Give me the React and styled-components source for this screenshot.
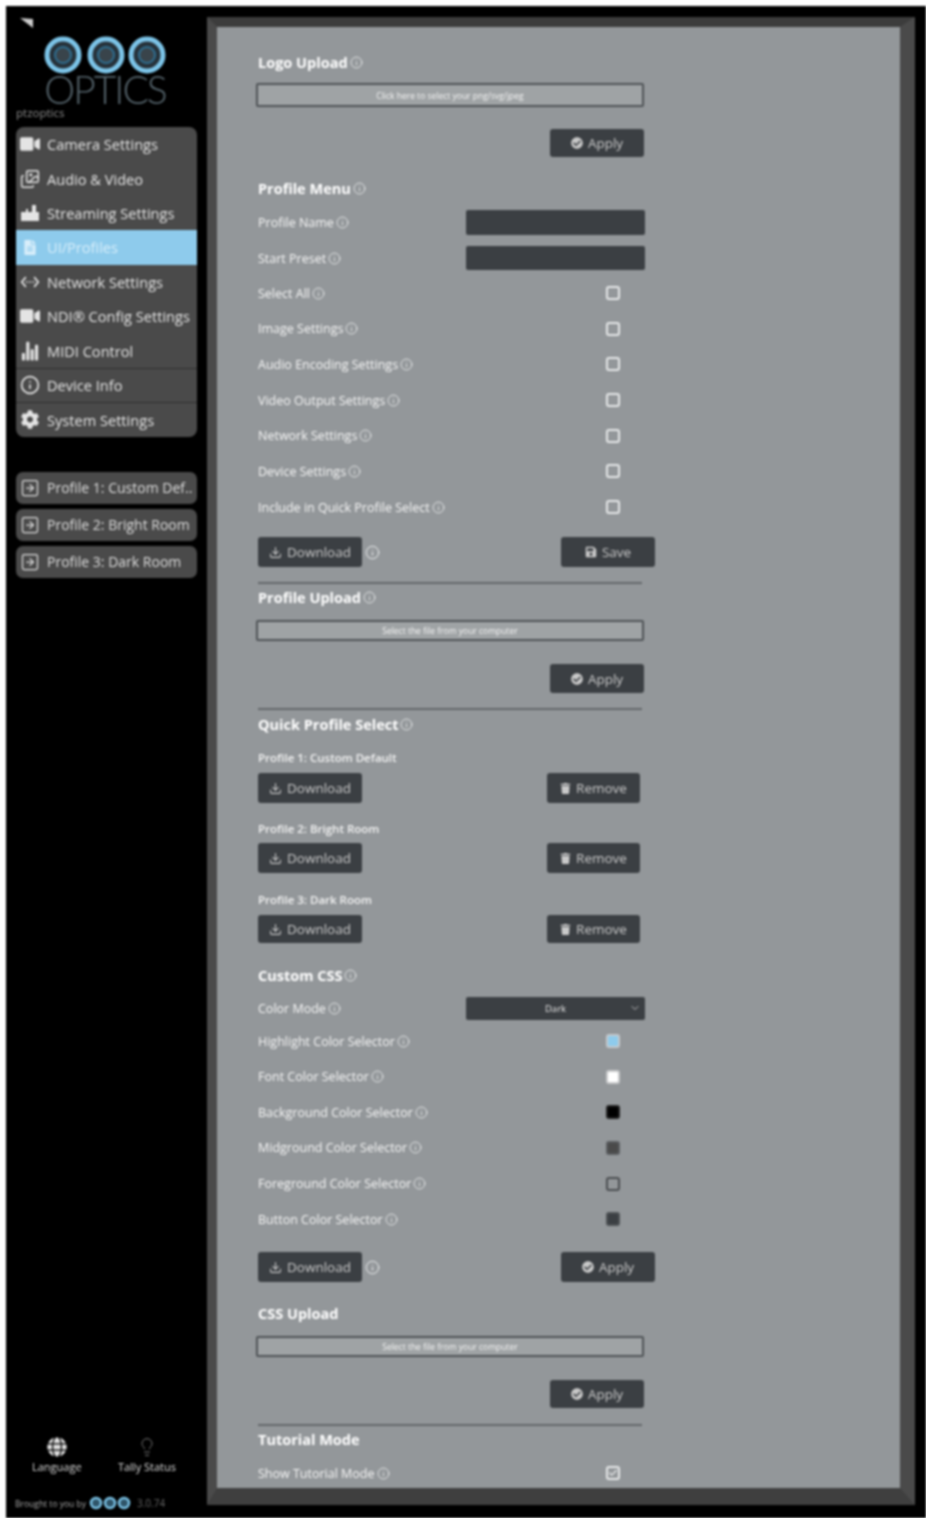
import React from 'react';
import styled, { createGlobalStyle } from 'styled-components';
import { FaVideo, FaFileAlt, FaCog, FaGlobe, FaSave, FaTrash, FaCheckCircle } from 'react-icons/fa';
import { MdSettingsEthernet } from 'react-icons/md';
import { IoStatsChart } from 'react-icons/io5';
import { Info, Lightbulb, SquareArrowRight, Download, ChevronDown, Check, Images } from 'lucide-react';

const GlobalStyle = createGlobalStyle`
    html, body {
        margin: 0;
        padding: 0;
        background: #fff;
    }
    body {
        padding: 6px 0 0 6px;
        font-family: "Open Sans", "Liberation Sans", sans-serif;
    }
`
const Page = styled.div`
    display: flex;
    height: 1512px;
    background: #000;
    filter: blur(1.25px);
`
const Sidebar = styled.aside`
    width: 201px;
    flex-shrink: 0;
    display: flex;
    flex-direction: column;
    padding-left: 10px;
    box-sizing: border-box;
`
const Collapse = styled.div`
    height: 16px;
    margin: 10px 0 0 3px;
    color: #ccc;
    svg { display: block; }
`
const LogoWrap = styled.div`
    display: flex;
    flex-direction: column;
    align-items: center;
    width: 181px;
    margin-top: 3px;
`
const LogoRings = styled.svg`
    display: block;
    margin-left: -3px;
`
const LogoWord = styled.div`
    font-family: "Lato", "Liberation Sans", sans-serif;
    font-weight: 300;
    font-size: 39px;
    line-height: 30px;
    letter-spacing: -2px;
    color: #56656d;
    margin: -1px 0 0 -3px;
`
const Host = styled.div`
    font-size: 11.5px;
    line-height: 14px;
    color: #8e8e8e;
    margin-top: 2px;
`
const Nav = styled.nav`
    width: 181px;
    margin-top: 7px;
    background: #4a4a4a;
    border-radius: 8px;
    overflow: hidden;
`
const NavItem = styled.div`
    display: flex;
    align-items: center;
    gap: 7px;
    height: 34.4px;
    padding-left: 4px;
    font-size: 14.6px;
    white-space: nowrap;
    color: ${p => (p.$active ? '#d8eefa' : '#e4e4e4')};
    background: ${p => (p.$active ? '#8ecbec' : 'transparent')};
    border-top: ${p => (p.$line ? '1px solid #2e2e2e' : 'none')};
    box-sizing: border-box;
    svg { flex-shrink: 0; width: 20px; }
`
const QuickList = styled.div`
    display: flex;
    flex-direction: column;
    gap: 5px;
    width: 181px;
    margin-top: 35px;
`
const QuickItem = styled.div`
    display: flex;
    align-items: center;
    gap: 7px;
    height: 32px;
    padding-left: 4px;
    background: #4a4a4a;
    border-radius: 7px;
    color: #dedede;
    font-size: 14px;
    white-space: nowrap;
    overflow: hidden;
    svg { flex-shrink: 0; }
`
const Footer = styled.div`
    margin-top: auto;
    display: flex;
    flex-direction: column;
    padding-bottom: 8px;
`
const FooterTools = styled.div`
    display: flex;
    justify-content: space-between;
    width: 144px;
    margin-left: 16px;
`
const Tool = styled.div`
    display: flex;
    flex-direction: column;
    align-items: center;
    gap: 4px;
    color: #ddd;
    font-size: 11px;
    line-height: 12px;
`
const Credit = styled.div`
    display: flex;
    align-items: center;
    gap: 3px;
    margin-top: 23px;
    font-size: 8.5px;
    color: #a8a8a8;
    margin-left: -1px;
`
const Version = styled.span`
    color: #666;
    font-size: 10px;
    margin-left: 3px;
`
const Panel = styled.main`
    width: 708px;
    margin: 11px 0 13px 0;
    border-style: solid;
    border-color: #3c3c3c #4a4a4a #3f3f3f #4a4a4a;
    border-width: 10px 15px 17px 10px;
    background: #93979a;
    box-sizing: border-box;
    padding: 26px 0 0 39px;
    overflow: hidden;
`
const Form = styled.div`
    width: 399px;
    display: flex;
    flex-direction: column;
`
const Heading = styled.h3`
    margin: ${p => p.$top}px 0 0 2px;
    height: 18px;
    display: flex;
    align-items: center;
    gap: 1px;
    font-size: 14.5px;
    font-weight: 700;
    color: #fff;
`
const FileBox = styled.div`
    margin-top: ${p => p.$top}px;
    width: 388px;
    height: ${p => p.$h}px;
    box-sizing: border-box;
    border: 2px solid #4e5256;
    background: #9fa3a5;
    border-radius: 2px;
    display: flex;
    align-items: center;
    justify-content: center;
    font-size: 8.5px;
    color: #f4f4f4;
`
const ButtonRow = styled.div`
    margin-top: ${p => p.$top}px;
    height: ${p => p.$h}px;
    display: flex;
    justify-content: ${p => (p.$single ? 'flex-end' : 'space-between')};
    align-items: stretch;
    padding-left: ${p => (p.$single ? 0 : 2)}px;
    padding-right: ${p => p.$right || 0}px;
`
const ButtonGroup = styled.div`
    display: flex;
    align-items: center;
    gap: 2px;
    height: 100%;
`
const Button = styled.div`
    width: ${p => p.$w}px;
    height: 100%;
    display: flex;
    align-items: center;
    justify-content: center;
    gap: 5px;
    background: #3b3f43;
    border-radius: 3px;
    color: #c9c9c9;
    font-size: 13.5px;
`
const Field = styled.div`
    margin-top: ${p => p.$top}px;
    height: ${p => p.$h}px;
    padding-left: 2px;
    display: flex;
    align-items: center;
    justify-content: space-between;
    padding-right: 10px;
`
const Label = styled.span`
    display: flex;
    align-items: center;
    gap: 1px;
    font-size: 12.5px;
    font-weight: 500;
    color: #f6f6f6;
    white-space: nowrap;
`
const InfoBadge = styled(Info)`
    color: #eceeef;
    margin-left: 1px;
`
const TextInput = styled.div`
    width: 179px;
    height: 100%;
    background: #3b3f43;
    border-radius: 2px;
`
const Select = styled.div`
    width: 179px;
    height: 100%;
    background: #3b3f43;
    border-radius: 2px;
    color: #e6e6e6;
    font-size: 9.5px;
    display: flex;
    align-items: center;
    justify-content: center;
    position: relative;
    svg {
        position: absolute;
        right: 4px;
        top: 5px;
        color: #bbb;
    }
`
const CheckSlot = styled.div`
    width: 179px;
    display: flex;
    justify-content: flex-end;
    padding-right: 25px;
    box-sizing: border-box;
`
const CheckBox = styled.div`
    width: 14px;
    height: 14px;
    box-sizing: border-box;
    border: 2px solid #e6e8e9;
    border-radius: 3px;
    color: #e6e8e9;
    display: flex;
    align-items: center;
    justify-content: center;
`
const Swatch = styled.div`
    width: 14px;
    height: 14px;
    box-sizing: border-box;
    border: 2px solid ${p => p.$edge};
    border-radius: 3px;
    background: ${p => p.$color};
`
const Divider = styled.hr`
    margin: ${p => p.$top}px 0 0 2px;
    width: 384px;
    height: 2px;
    border: 0;
    background: #63676a;
`
const SubLabel = styled.div`
    margin: ${p => p.$top}px 0 0 2px;
    height: 16px;
    display: flex;
    align-items: center;
    font-size: 11.5px;
    font-weight: 600;
    color: #f4f4f4;
`

const StreamIcon = () => (
    <svg width="20" height="20" viewBox="0 0 20 20" fill="currentColor">
        <path d="M1 9h5V6h2v3h4V2h4v7h3v9H1z" />
    </svg>
)

const navItems = [
    { text: 'Camera Settings', icon: <FaVideo size={18} /> },
    { text: 'Audio & Video', icon: <Images size={20} strokeWidth={1.8} /> },
    { text: 'Streaming Settings', icon: <StreamIcon /> },
    { text: 'UI/Profiles', icon: <FaFileAlt size={15} />, active: true },
    { text: 'Network Settings', icon: <MdSettingsEthernet size={20} /> },
    { text: 'NDI® Config Settings', icon: <FaVideo size={18} /> },
    { text: 'MIDI Control', icon: <IoStatsChart size={20} /> },
    { text: 'Device Info', icon: <Info size={20} />, line: true },
    { text: 'System Settings', icon: <FaCog size={19} />, line: true },
]
const profiles = ['Profile 1: Custom Def..', 'Profile 2: Bright Room', 'Profile 3: Dark Room']
const menuRows = [
    'Select All',
    'Image Settings',
    'Audio Encoding Settings',
    'Video Output Settings',
    'Network Settings',
    'Device Settings',
    'Include in Quick Profile Select',
]
const colorRows = [
    { text: 'Highlight Color Selector', color: '#8ecbec', edge: '#c5c9cc' },
    { text: 'Font Color Selector', color: '#ffffff', edge: '#c8cacb' },
    { text: 'Background Color Selector', color: '#000000', edge: '#222' },
    { text: 'Midground Color Selector', color: '#4a4a4a', edge: '#5a5d60' },
    { text: 'Foreground Color Selector', color: '#93979a', edge: '#4a4d50' },
    { text: 'Button Color Selector', color: '#3b3f43', edge: '#4d5154' },
]
const quickRows = [
    { text: 'Profile 1: Custom Default', labelTop: 16, top: 8, h: 30 },
    { text: 'Profile 2: Bright Room', labelTop: 17, top: 7, h: 30 },
    { text: 'Profile 3: Dark Room', labelTop: 18, top: 8, h: 28 },
]

function Tip({ size = 13 }) {
    return <InfoBadge size={size} strokeWidth={1.6} />
}

function ActionButton({ icon, text, w = 94 }) {
    return (
        <Button $w={w}>
            {icon}
            {text}
        </Button>
    )
}

const ApplyButton = () => <ActionButton icon={<FaCheckCircle size={12} />} text="Apply" />
const DownloadButton = () => <ActionButton icon={<Download size={13} />} text="Download" w={104} />

function App() {
    return (
        <>
            <GlobalStyle />
            <Page>
                <Sidebar>
                    <Collapse>
                        <svg width="16" height="14" viewBox="0 0 16 14">
                            <path d="M1 2 L14 3 L14 12 Z" fill="#ccc" />
                        </svg>
                    </Collapse>
                    <LogoWrap>
                        <LogoRings width="124" height="40" viewBox="0 0 124 40">
                            {[20, 63, 104].map(cx => (
                                <g key={cx}>
                                    <circle cx={cx} cy="20" r="16" fill="#27323a" stroke="#7cc4e8" strokeWidth="5" />
                                    <circle cx={cx} cy="20" r="8" fill="#39444b" stroke="#2f6f92" strokeWidth="2" />
                                </g>
                            ))}
                        </LogoRings>
                        <LogoWord>OPTICS</LogoWord>
                    </LogoWrap>
                    <Host>ptzoptics</Host>
                    <Nav>
                        {navItems.map(item => (
                            <NavItem key={item.text} $active={item.active} $line={item.line}>
                                {item.icon}
                                {item.text}
                            </NavItem>
                        ))}
                    </Nav>
                    <QuickList>
                        {profiles.map(name => (
                            <QuickItem key={name}>
                                <SquareArrowRight size={20} strokeWidth={1.5} />
                                {name}
                            </QuickItem>
                        ))}
                    </QuickList>
                    <Footer>
                        <FooterTools>
                            <Tool>
                                <FaGlobe size={20} />
                                Language
                            </Tool>
                            <Tool>
                                <Lightbulb size={20} strokeWidth={1.2} color="#777" />
                                Tally Status
                            </Tool>
                        </FooterTools>
                        <Credit>
                            Brought to you by
                            <svg width="42" height="14" viewBox="0 0 42 14">
                                {[7, 21, 35].map(cx => (
                                    <circle key={cx} cx={cx} cy="7" r="5" fill="#2f5468" stroke="#7cc4e8" strokeWidth="2.5" />
                                ))}
                            </svg>
                            <Version>3.0.74</Version>
                        </Credit>
                    </Footer>
                </Sidebar>
                <Panel>
                    <Form>
                        <Heading $top={0}>Logo Upload<Tip /></Heading>
                        <FileBox $top={12} $h={24}>Click here to select your png/svg/jpeg</FileBox>
                        <ButtonRow $top={22} $h={28} $single $right={11}><ApplyButton /></ButtonRow>

                        <Heading $top={22}>Profile Menu<Tip /></Heading>
                        <Field $top={13} $h={25}>
                            <Label>Profile Name<Tip /></Label>
                            <TextInput />
                        </Field>
                        <Field $top={11} $h={24}>
                            <Label>Start Preset<Tip /></Label>
                            <TextInput />
                        </Field>
                        {menuRows.map((text, i) => (
                            <Field key={text} $top={i === 0 ? 13 : 15.7} $h={20}>
                                <Label>{text}<Tip /></Label>
                                <CheckSlot><CheckBox /></CheckSlot>
                            </Field>
                        ))}
                        <ButtonRow $top={20} $h={30}>
                            <ButtonGroup><DownloadButton /><Tip size={15} /></ButtonGroup>
                            <ActionButton icon={<FaSave size={12} />} text="Save" />
                        </ButtonRow>
                        <Divider $top={15} />

                        <Heading $top={4}>Profile Upload<Tip /></Heading>
                        <FileBox $top={14} $h={21}>Select the file from your computer</FileBox>
                        <ButtonRow $top={23} $h={29} $single $right={11}><ApplyButton /></ButtonRow>
                        <Divider $top={15} />

                        <Heading $top={5}>Quick Profile Select<Tip /></Heading>
                        {quickRows.map(row => (
                            <React.Fragment key={row.text}>
                                <SubLabel $top={row.labelTop}>{row.text}</SubLabel>
                                <ButtonRow $top={row.top} $h={row.h} $right={15}>
                                    <DownloadButton />
                                    <ActionButton icon={<FaTrash size={11} />} text="Remove" w={93} />
                                </ButtonRow>
                            </React.Fragment>
                        ))}

                        <Heading $top={23}>Custom CSS<Tip /></Heading>
                        <Field $top={13} $h={23}>
                            <Label>Color Mode<Tip /></Label>
                            <Select>Dark<ChevronDown size={12} /></Select>
                        </Field>
                        {colorRows.map((row, i) => (
                            <Field key={row.text} $top={i === 0 ? 11 : 15.6} $h={20}>
                                <Label>{row.text}<Tip /></Label>
                                <CheckSlot><Swatch $color={row.color} $edge={row.edge} /></CheckSlot>
                            </Field>
                        ))}
                        <ButtonRow $top={23} $h={30}>
                            <ButtonGroup><DownloadButton /><Tip size={15} /></ButtonGroup>
                            <ActionButton icon={<FaCheckCircle size={12} />} text="Apply" />
                        </ButtonRow>

                        <Heading $top={22}>CSS Upload</Heading>
                        <FileBox $top={14} $h={21}>Select the file from your computer</FileBox>
                        <ButtonRow $top={23} $h={28} $single $right={11}><ApplyButton /></ButtonRow>
                        <Divider $top={16} />

                        <Heading $top={4}>Tutorial Mode</Heading>
                        <Field $top={15} $h={20}>
                            <Label>Show Tutorial Mode<Tip /></Label>
                            <CheckSlot><CheckBox><Check size={10} strokeWidth={3} /></CheckBox></CheckSlot>
                        </Field>
                    </Form>
                </Panel>
            </Page>
        </>
    )
}

export default App
